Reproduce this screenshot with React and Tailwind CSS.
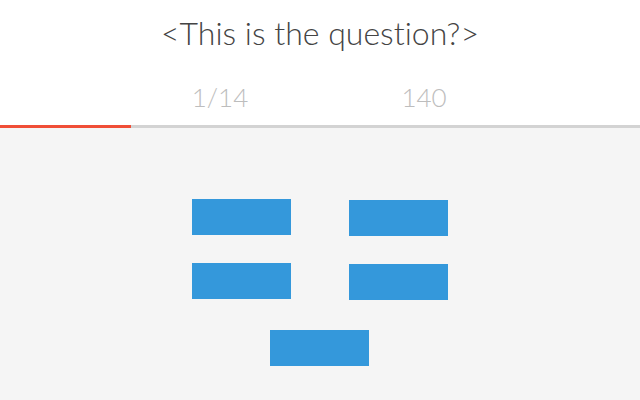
import React from 'react';

const Box = ({ className = '' }) => (
  <div className={`w-[99px] h-[36px] bg-[#3498db] ${className}`} />
);

export default function App() {
  return (
    <div className="w-[640px] h-[400px] flex flex-col bg-[#f5f5f5] font-['Lato',sans-serif] [font-variant-ligatures:none] overflow-hidden">
      <div className="bg-white">
        <h1 className="h-[68px] pt-[14px] text-center text-[32px] leading-[38px] font-light text-[#444]">
          &lt;This is the question?&gt;
        </h1>
        <div className="h-[57px] flex justify-center pt-[13px] text-[26px] leading-[32px] font-light text-[#bdbdbd]">
          <div className="w-[200px] text-center">1/14</div>
          <div className="w-[200px] pl-[8px] text-center">140</div>
        </div>
        <div className="h-[3px] bg-[#d3d3d3]">
          <div className="h-full w-[131px] bg-[#f04e37]" />
        </div>
      </div>

      <div className="flex flex-col items-center pt-[71px]">
        <div className="flex items-start gap-[58px]">
          <Box />
          <Box className="mt-px" />
        </div>
        <div className="flex items-start gap-[58px] mt-[27px]">
          <Box />
          <Box className="mt-px" />
        </div>
        <div className="mt-[30px] mr-px">
          <Box />
        </div>
      </div>
    </div>
  );
}
